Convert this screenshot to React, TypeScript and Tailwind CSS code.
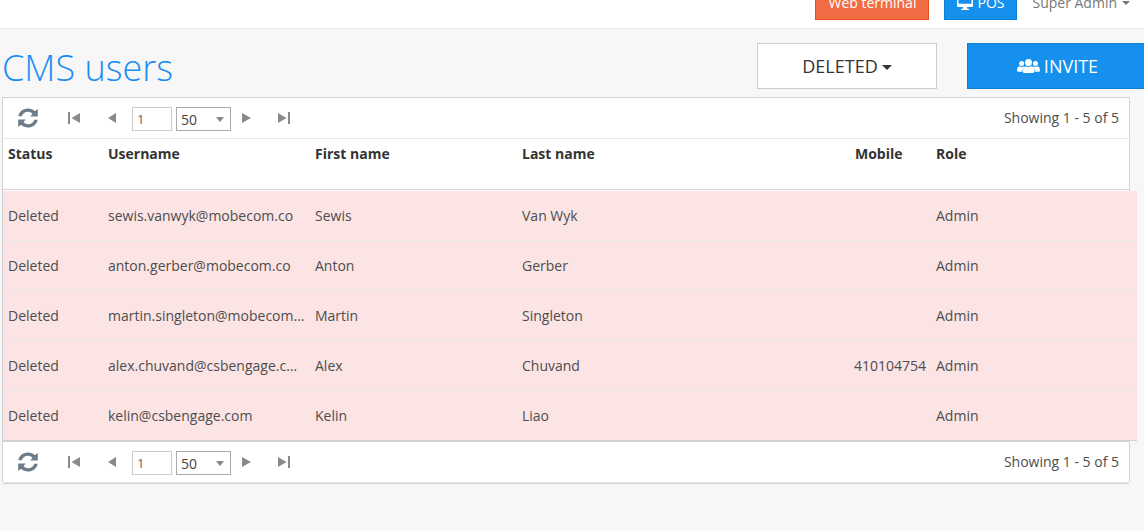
import React from "react";

const columns = "grid grid-cols-[100px_207px_207px_310px_104px_1fr]";

const users = [
  ["sewis.vanwyk@mobecom.co", "Sewis", "Van Wyk", ""],
  ["anton.gerber@mobecom.co", "Anton", "Gerber", ""],
  ["martin.singleton@mobecom.co", "Martin", "Singleton", ""],
  ["alex.chuvand@csbengage.com", "Alex", "Chuvand", "410104754"],
  ["kelin@csbengage.com", "Kelin", "Liao", ""],
];

function RefreshIcon() {
  return (
    <svg viewBox="0 0 20 20" className="h-5 w-5 fill-[#6c7d8c]">
      <path d="M.3 8.3C1.2 3.5 5 .5 10 .5c2.600 0 5 1 6.800 2.800L19.800 1v7.600h-7.600l2.300-2.700C13.200 4.400 11.700 3.700 10 3.700c-3.100 0-5.300 1.800-6.200 4.600z" />
      <path d="M19.700 11.700c-.9 4.800-4.700 7.800-9.700 7.800-2.600 0-5-1-6.800-2.800L.2 19v-7.600h7.600l-2.300 2.700c1.300 1.500 2.800 2.200 4.500 2.200 3.100 0 5.300-1.800 6.200-4.600z" />
    </svg>
  );
}

function UsersIcon() {
  return (
    <svg viewBox="0 0 23 14" className="mb-px h-[14px] w-[23px] fill-white">
      <circle cx="4.600" cy="4.600" r="2.500" />
      <circle cx="18.400" cy="4.600" r="2.500" />
      <circle cx="11.500" cy="3.500" r="3.500" />
      <path d="M2.300 7.300q2.300 1.200 4.300.2l.7.6Q5.300 9.500 5 12.700H1.200Q0 12.700 0 11.500 0 8 2.300 7.300zM20.700 7.300q-2.300 1.200-4.300.2l-.7.6q2 1.400 2.300 4.600h3.800q1.200 0 1.200-1.200 0-3.500-2.300-4.200zM8.700 7.300q2.800 1.500 5.600 0 2.800.3 3.100 5 0 1.700-1.600 1.700H7.200q-1.600 0-1.600-1.700.3-4.700 3.100-5z" />
    </svg>
  );
}

function Pager() {
  return (
    <div className="flex h-10 items-start pl-[15px] pr-[10px] text-[#4d4d4d]">
      <div className="mt-[10px]"><RefreshIcon /></div>
      <svg viewBox="0 0 12 12" className="ml-[30px] mt-[14px] h-3 w-3 fill-[#8a8a8a]">
        <path d="M0 0h2v12H0zM12 1v10L3.500 6z" />
      </svg>
      <svg viewBox="0 0 8 10" className="ml-[28px] mt-[15px] h-[10px] w-2 fill-[#8a8a8a]">
        <path d="M8 0v10L0 5z" />
      </svg>
      <div className="ml-4 mt-[9px] flex h-6 w-10 items-center border border-[#ccc] pl-[4px] pt-[2px] text-[13px] text-[#666]">1</div>
      <div className="ml-1 mt-[9px] flex h-6 w-[55px] items-center justify-between border border-[#aaa] pl-[4px] pr-[6px] text-[14px] text-[#444]">
        50
        <svg viewBox="0 0 8 5" className="h-[5px] w-2 fill-[#888]"><path d="M0 0h8L4 5z" /></svg>
      </div>
      <svg viewBox="0 0 9 10" className="ml-[11px] mt-[15px] h-[10px] w-[9px] fill-[#8a8a8a]">
        <path d="M0 0v10L9 5z" />
      </svg>
      <svg viewBox="0 0 12 12" className="ml-[27px] mt-[14px] h-3 w-3 fill-[#8a8a8a]">
        <path d="M10 0h2v12h-2zM0 1v10L8.500 6z" />
      </svg>
      <div className="ml-auto mt-[10px] text-[14px] leading-5">Showing 1 - 5 of 5</div>
    </div>
  );
}

export default function App() {
  return (
    <div className="h-[531px] w-[1144px] overflow-hidden bg-[#f7f7f7] font-['Open_Sans',sans-serif] text-[14px] text-[#333]">
      <header className="flex h-[29px] items-end justify-end border-b border-[#e7e7e7] bg-white pb-2 pr-[14px]">
        <button className="flex h-10 w-[114px] shrink-0 items-center justify-center border border-[#e9501f] bg-[#f26c43] pt-[5px] text-[14px] text-white">Web terminal</button>
        <button className="ml-[15px] flex h-10 w-[73px] shrink-0 items-center justify-center gap-1 border border-[#0f80d6] bg-[#1590ec] pt-[5px] text-[14px] text-white">
          <svg viewBox="0 0 16 14" className="h-[14px] w-4 fill-white"><path fillRule="evenodd" d="M1 0h14q1 0 1 1v9q0 1-1 1h-5v1.500l2 .5v1H4v-1l2-.5V11H1q-1 0-1-1V1q0-1 1-1zm.5 1.300v6.500h13V1.300z" /></svg>
          POS
        </button>
        <div className="ml-[15px] flex h-10 items-center gap-[5px] pt-[5px] text-[14px] text-[#777]">
          Super Admin
          <svg viewBox="0 0 8 4" className="mt-[1px] h-1 w-2 fill-[#777]"><path d="M0 0h8L4 4z" /></svg>
        </div>
      </header>

      <div className="flex h-[68px] pt-[14px]">
        <h1 className="flex-1 pl-[2px] text-[36px] font-light leading-[49px] text-[#1b8df2]">CMS users</h1>
        <button className="flex h-[46px] w-[180px] items-center justify-center gap-1 border border-[#ccc] bg-white text-[18px]">
          DELETED
          <svg viewBox="0 0 10 5" className="mt-[3px] h-[5px] w-[10px] fill-[#333]"><path d="M0 0h10L5 5z" /></svg>
        </button>
        <button className="ml-[30px] flex h-[46px] w-[177px] shrink-0 items-center justify-center gap-1 border border-r-0 border-[#0f80d6] bg-[#1590ec] pl-[3px] text-[18px] text-white">
          <UsersIcon />
          INVITE
        </button>
      </div>

      <main className="ml-[2px] w-[1128px] border border-b-0 border-[#d2d2d2] bg-white">
        <div className="border-b border-[#e7e7e7]"><Pager /></div>
        <div className={`${columns} h-[51px] border-b border-[#d2d2d2] pl-[5px] pt-[5px] font-bold leading-5`}>
          <span>Status</span>
          <span>Username</span>
          <span>First name</span>
          <span>Last name</span>
          <span className="pl-[23px]">Mobile</span>
          <span>Role</span>
        </div>
        <div className="w-[1134px] border-b border-[#d2d2d2] pt-px">
          {users.map(([email, first, last, mobile]) => (
            <div key={email} className={`${columns} h-[50px] border-b border-[#e9e9eb] bg-[#fce4e4] pl-[5px] leading-[49px] text-[#4d4d4d] last:h-[49px] last:border-0`}>
              <span>Deleted</span>
              <span className="truncate pr-[10px]">{email}</span>
              <span>{first}</span>
              <span>{last}</span>
              <span className="pr-[10px] text-right">{mobile}</span>
              <span>Admin</span>
            </div>
          ))}
        </div>
        <div className="border-t border-[#d2d2d2]"><Pager /></div>
      </main>
      <div className="ml-[3px] h-[2px] w-[1126px] border-b border-t border-b-[#d2d2d2] border-t-[#e7e7e7]" />
    </div>
  );
}
